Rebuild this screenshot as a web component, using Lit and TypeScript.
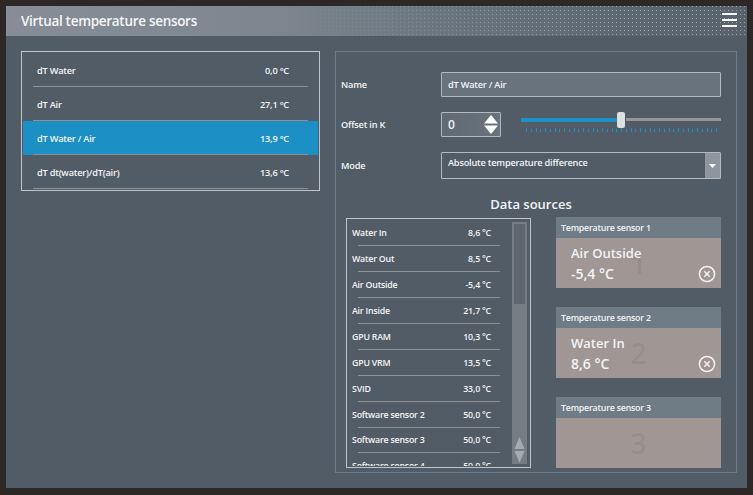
import { LitElement, html, css, svg } from "lit";
import { customElement } from "lit/decorators.js";

const mainRows = [
  ["dT Water", "0,0 °C"],
  ["dT Air", "27,1 °C"],
  ["dT Water / Air", "13,9 °C"],
  ["dT dt(water)/dT(air)", "13,6 °C"],
];
const srcRows = [
  ["Water In", "8,6 °C"],
  ["Water Out", "8,5 °C"],
  ["Air Outside", "-5,4 °C"],
  ["Air Inside", "21,7 °C"],
  ["GPU RAM", "10,3 °C"],
  ["GPU VRM", "13,5 °C"],
  ["SVID", "33,0 °C"],
  ["Software sensor 2", "50,0 °C"],
  ["Software sensor 3", "50,0 °C"],
  ["Software sensor 4", "50,0 °C"],
];
const cards = [
  { n: 1, name: "Air Outside", v: "-5,4 °C" },
  { n: 2, name: "Water In", v: "8,6 °C" },
  { n: 3, name: "", v: "" },
];

@customElement("app-root")
export class AppRoot extends LitElement {
  static styles = css`
    :host {
      display: block;
      width: 753px;
      height: 495px;
      background: #2d2826;
      font-family: "Open Sans", "Noto Sans", sans-serif;
      color: #f2f4f5;
      overflow: hidden;
    }
    * { box-sizing: border-box; }
    .window {
      margin: 6px 6px 0;
      width: 741px;
      height: 482px;
      background: #525c67;
      display: flex;
      flex-direction: column;
    }
    .titlebar {
      height: 30px;
      flex: none;
      display: flex;
      align-items: center;
      justify-content: space-between;
      padding: 0 10px 0 15px;
      background: linear-gradient(90deg, #868d96 0%, #7e8790 35%, #68737d 62%, #5a6570 90%, #57626c 100%);
      position: relative;
    }
    .titlebar::before {
      content: "";
      position: absolute;
      inset: 0 0 0 270px;
      background-image: radial-gradient(circle at .5px .5px, rgba(255,255,255,.42) .7px, transparent .8px);
      background-size: 4px 4px;
      -webkit-mask-image: linear-gradient(90deg, transparent, rgba(0,0,0,.45) 30%, #000 75%);
      mask-image: linear-gradient(90deg, transparent, rgba(0,0,0,.45) 30%, #000 75%);
    }
    h1 {
      position: relative;
      margin: 0;
      font-size: 13.5px;
      font-weight: 600;
      letter-spacing: -0.3px;
      color: #f5f6f7;
    }
    .burger {
      position: relative;
      width: 15px;
      height: 14px;
      margin-top: -2px;
      display: flex;
      flex-direction: column;
      justify-content: space-between;
    }
    .burger i { display: block; height: 2px; background: #fff; }
    .content {
      flex: 1;
      display: flex;
      align-items: flex-start;
      padding: 15px 10px 15px 15px;
      gap: 15px;
    }
    .mainlist {
      width: 299px;
      height: 140px;
      border: 1px solid #c0c4c8;
      padding: 1px;
      flex: none;
    }
    .mrow {
      height: 34px;
      display: flex;
      align-items: center;
      padding: 0 29px 0 14px;
      justify-content: space-between;
      font-size: 9.2px;
      font-weight: 600;
      letter-spacing: -0.2px;
      position: relative;
    }
    .mrow::after {
      content: "";
      position: absolute;
      left: 10px;
      right: 10px;
      bottom: 0;
      height: 1px;
      background: #8d9297;
    }
    .mrow.sel { background: #1c90c4; }
    .panel {
      width: 402px;
      height: 422px;
      border: 1px solid #6d7d8f;
      flex: none;
      padding: 20px 15px 4px 5px;
      display: flex;
      flex-direction: column;
    }
    .frow {
      display: grid;
      grid-template-columns: 100px 1fr;
      align-items: center;
      font-size: 9.2px;
      font-weight: 600;
      letter-spacing: -0.2px;
    }
    .input {
      height: 25px;
      background: #68737d;
      border: 1px solid #b4b9bd;
      border-radius: 1px;
      padding: 0 6px;
      display: flex;
      align-items: center;
    }
    .offset { margin-top: 15px; }
    .ctrl { display: flex; gap: 20px; align-items: flex-start; height: 25px; }
    .num {
      width: 60px;
      height: 25px;
      background: linear-gradient(90deg, #5f6a74, #68737d);
      border: 1px solid #b4b9bd;
      border-radius: 1px;
      display: flex;
      align-items: center;
      justify-content: space-between;
      padding: 0 2px 0 6px;
      font-size: 12px;
      letter-spacing: 0;
    }
    .slider { width: 200px; position: relative; height: 25px; }
    .track-on { position: absolute; left: 0; top: 6px; width: 96px; height: 4px; background: #1c90c4; }
    .track-off { position: absolute; left: 105px; right: 0; top: 6px; height: 3px; background: #93979b; }
    .thumb { position: absolute; left: 96px; top: 0; width: 8px; height: 16px; background: #dcdee0; border-radius: 2px; }
    .ticks { position: absolute; left: 5px; top: 16px; }
    .select {
      height: 27px;
      border: 1px solid #b4b9bd;
      border-radius: 1px;
      display: flex;
      justify-content: space-between;
    }
    .frow.mode { margin-top: 15px; }
    .select span { padding: 3px 0 0 6px; }
    .select b { width: 15px; background: #8e959c; display: flex; align-items: center; justify-content: center; }
    h2 {
      margin: 15px 0 0;
      font-size: 13px;
      font-weight: 600;
      height: 24px;
      line-height: 20px;
      text-align: center;
    }
    .sources { display: flex; gap: 25px; padding-left: 5px; align-items: flex-start; }
    .srclist {
      width: 185px;
      height: 250px;
      border: 1px solid #c0c4c8;
      position: relative;
      flex: none;
      padding: 1px 0 0 5px;
    }
    .srclip { height: 246px; overflow: hidden; }
    .srow {
      height: 25.95px;
      width: 139px;
      display: flex;
      justify-content: space-between;
      align-items: center;
      font-size: 8.8px;
      font-weight: 600;
      letter-spacing: -0.2px;
      position: relative;
    }
    .srow::after {
      content: "";
      position: absolute;
      left: 6px;
      width: 142px;
      bottom: 0;
      height: 1px;
      background: #8d9297;
    }
    .scroll {
      position: absolute;
      right: 3px;
      top: 3px;
      bottom: 3px;
      width: 15px;
      background: #767d83;
      padding: 2px;
    }
    .scroll i { display: block; width: 11px; height: 80px; background: #5d656d; }
    .scroll svg { position: absolute; left: 2px; bottom: 1px; }
    .cards { width: 165px; display: flex; flex-direction: column; gap: 19px; flex: none; margin-top: -1px; }
    .card { height: 71px; background: #a09694; display: flex; flex-direction: column; }
    .card header {
      height: 21px;
      background: #6f7b85;
      font-size: 8.8px;
      font-weight: 600;
      letter-spacing: -0.2px;
      padding: 0 5px;
      display: flex;
      align-items: center;
      flex: none;
    }
    .cbody { flex: 1; position: relative; padding: 5px 15px; font-size: 13px; font-weight: 600; line-height: 21px; }
    .cbody .val { font-size: 14px; margin-top: -1px; }
    .ghost {
      position: absolute;
      left: 0; right: 0;
      top: -3px;
      text-align: center;
      font-size: 28px;
      font-weight: 600;
      line-height: 56px;
      color: rgba(125,120,122,.28);
    }
    .cbody span { position: relative; display: block; }
    .x { position: absolute; right: 5px; bottom: 6px; }
  `;

  render() {
    const ticks = Array.from({ length: 41 }, (_, i) => i);
    return html`
      <div class="window">
        <div class="titlebar">
          <h1>Virtual temperature sensors</h1>
          <div class="burger"><i></i><i></i><i></i></div>
        </div>
        <div class="content">
          <div class="mainlist">
            ${mainRows.map(
              (r, i) => html`<div class="mrow ${i === 2 ? "sel" : ""}"><span>${r[0]}</span><span>${r[1]}</span></div>`
            )}
          </div>
          <div class="panel">
            <div class="frow"><span>Name</span><div class="input">dT Water / Air</div></div>
            <div class="frow offset">
              <span>Offset in K</span>
              <div class="ctrl">
                <div class="num">
                  <span>0</span>
                  <svg width="14" height="19" viewBox="0 0 14 19"><path d="M7 0 L14 8.5 H0Z M0 10.5 H14 L7 19Z" fill="#fff"/></svg>
                </div>
                <div class="slider">
                  <div class="track-on"></div>
                  <div class="track-off"></div>
                  <div class="thumb"></div>
                  <svg class="ticks" width="192" height="6">
                    ${ticks.map(
                      (i) => svg`<rect x=${Math.round(i * 4.75)} y=${i % 2 ? 1 : 0} width="1" height=${i % 2 ? 3 : 4} fill="#1c90c4"/>`
                    )}
                  </svg>
                </div>
              </div>
            </div>
            <div class="frow mode">
              <span>Mode</span>
              <div class="select">
                <span>Absolute temperature difference</span>
                <b><svg width="7" height="4"><path d="M0 0H7L3.5 4Z" fill="#fff"/></svg></b>
              </div>
            </div>
            <h2>Data sources</h2>
            <div class="sources">
              <div class="srclist">
                <div class="srclip">
                  ${srcRows.map((r) => html`<div class="srow"><span>${r[0]}</span><span>${r[1]}</span></div>`)}
                </div>
                <div class="scroll">
                  <i></i>
                  <svg width="11" height="26" viewBox="0 0 11 26"><path d="M5.5 0 L10.5 12 H.5Z M.5 14 H10.5 L5.5 26Z" fill="#a5abb0"/></svg>
                </div>
              </div>
              <div class="cards">
                ${cards.map(
                  (c) => html`<div class="card">
                    <header>Temperature sensor ${c.n}</header>
                    <div class="cbody">
                      <div class="ghost">${c.n}</div>
                      ${c.name ? html`<span>${c.name}</span><span class="val">${c.v}</span>` : ""}
                      ${c.name
                        ? html`<svg class="x" width="18" height="18" viewBox="0 0 18 18" fill="none" stroke="#f2f2f2">
                              <circle cx="9" cy="9" r="7.6" stroke-width="1.5"/>
                              <path d="M6.3 6.3L11.7 11.7M11.7 6.3L6.3 11.7" stroke-width="1.5"/>
                            </svg>`
                        : ""}
                    </div>
                  </div>`
                )}
              </div>
            </div>
          </div>
        </div>
      </div>
    `;
  }
}
